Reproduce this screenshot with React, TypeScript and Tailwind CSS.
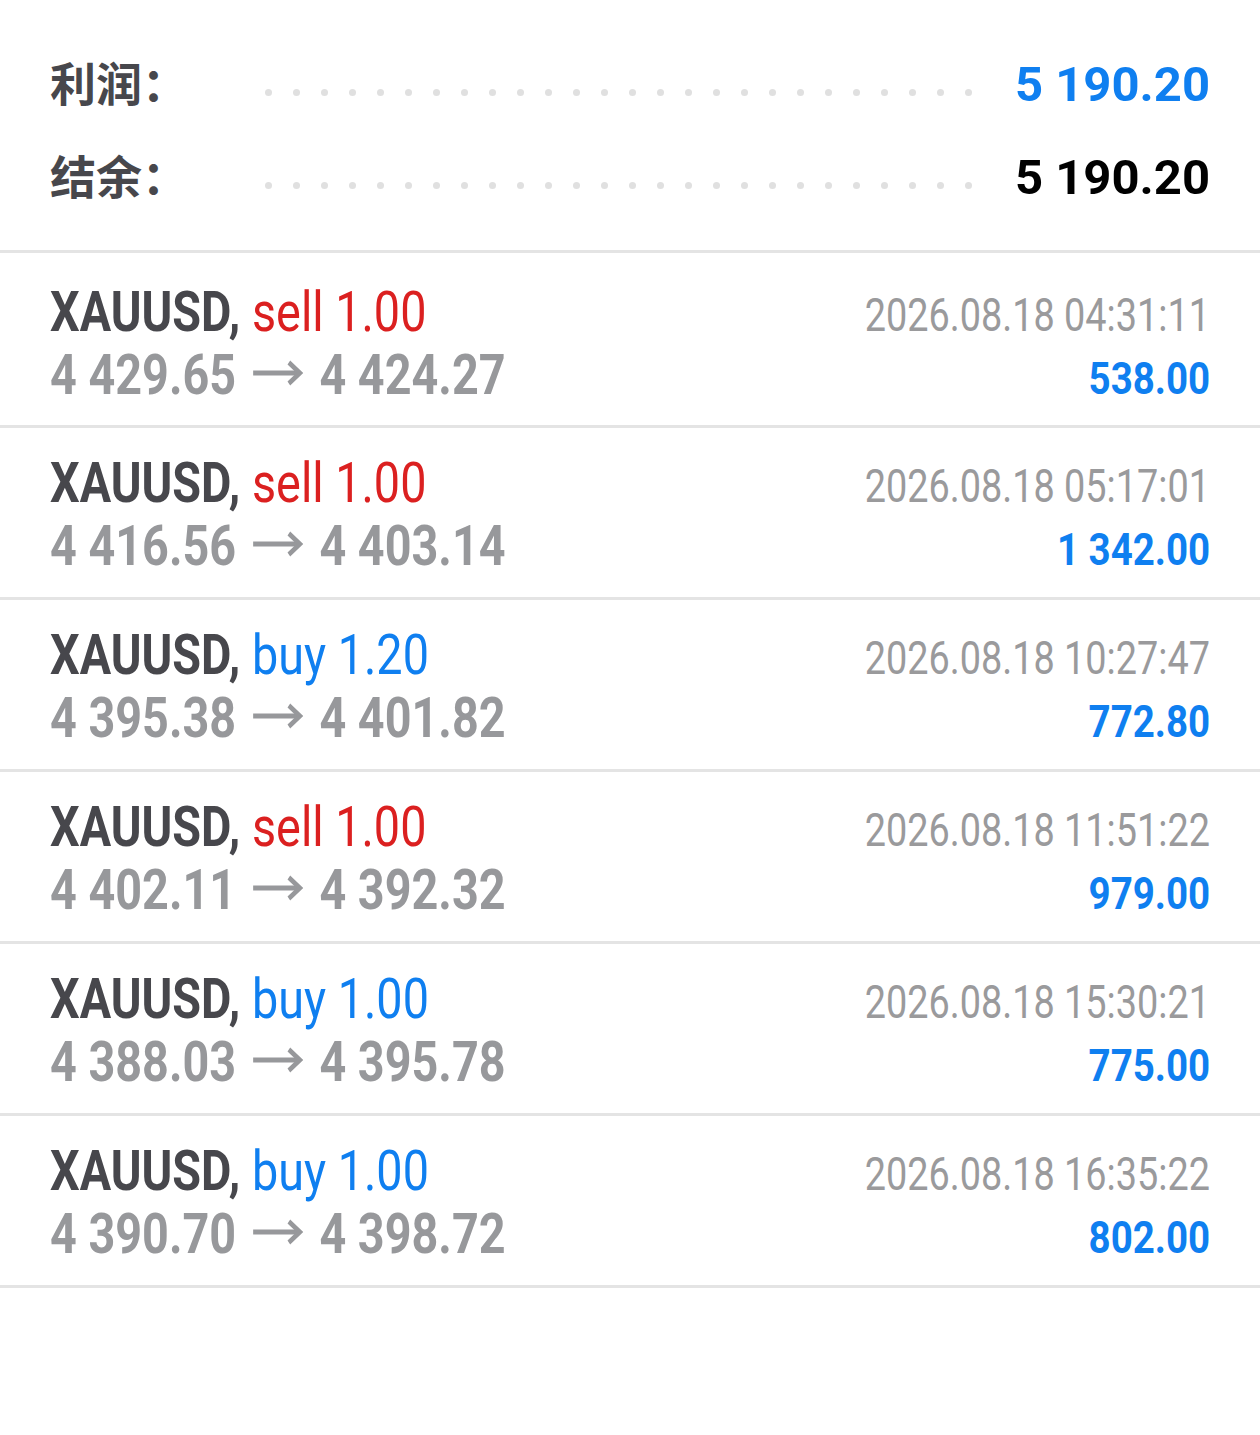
import React from "react";

type Deal = {
  side: "sell" | "buy";
  vol: string;
  open: string;
  close: string;
  time: string;
  profit: string;
};

const deals: Deal[] = [
  { side: "sell", vol: "1.00", open: "4 429.65", close: "4 424.27", time: "2026.08.18 04:31:11", profit: "538.00" },
  { side: "sell", vol: "1.00", open: "4 416.56", close: "4 403.14", time: "2026.08.18 05:17:01", profit: "1 342.00" },
  { side: "buy", vol: "1.20", open: "4 395.38", close: "4 401.82", time: "2026.08.18 10:27:47", profit: "772.80" },
  { side: "sell", vol: "1.00", open: "4 402.11", close: "4 392.32", time: "2026.08.18 11:51:22", profit: "979.00" },
  { side: "buy", vol: "1.00", open: "4 388.03", close: "4 395.78", time: "2026.08.18 15:30:21", profit: "775.00" },
  { side: "buy", vol: "1.00", open: "4 390.70", close: "4 398.72", time: "2026.08.18 16:35:22", profit: "802.00" },
];

function Dots() {
  return (
    <div className="w-[707px] flex justify-between -translate-y-[5px]">
      {Array.from({ length: 26 }).map((_, i) => (
        <div key={i} className="w-[7px] h-[7px] rounded-full bg-[#e0e0e0]" />
      ))}
    </div>
  );
}

function SummaryRow({ label, value, color }: { label: string; value: string; color: string }) {
  return (
    <div className="h-[93px] flex items-baseline leading-[60px]">
      <div className="w-[215px] font-['Noto_Sans_CJK_SC',sans-serif] font-bold text-[46px] text-[#47474c]">
        {label}
      </div>
      <Dots />
      <div className={`flex-1 text-right font-['Roboto',sans-serif] font-bold text-[49px] ${color}`}>{value}</div>
    </div>
  );
}

function Arrow() {
  return (
    <svg
      width="60"
      height="26"
      viewBox="0 0 60 26"
      className="inline-block align-[8px] mx-[19px]"
      fill="none"
      stroke="#97989b"
      strokeWidth="5"
    >
      <path d="M1 13 H55" />
      <path d="M43 2.5 L56 13 L43 23.5" strokeLinejoin="miter" />
    </svg>
  );
}

function DealRow({ d, first }: { d: Deal; first: boolean }) {
  const sideColor = d.side === "sell" ? "text-[#db2020]" : "text-[#0f7ff0]";
  return (
    <div
      className={`${first ? "h-[175px] pt-[29px]" : "h-[172px] pt-[25px]"} border-b-[3px] border-[#e4e4e4] px-[50px] font-['Roboto',sans-serif]`}
    >
      <div className="flex justify-between items-baseline leading-[60px] whitespace-nowrap">
        <span className="inline-block origin-left scale-x-[0.85] text-[55px]">
          <span className="font-bold text-[#47474c]">XAUUSD, </span>
          <span className={`${sideColor}`}>
            {d.side} {d.vol}
          </span>
        </span>
        <span className="inline-block origin-right scale-x-[0.822] text-[46px] text-[#9a9a9c]">{d.time}</span>
      </div>
      <div className="flex justify-between items-baseline leading-[60px] whitespace-nowrap">
        <span className="inline-block origin-left scale-x-[0.85] text-[55px] font-bold text-[#97989b]">
          {d.open}
          <Arrow />
          {d.close}
        </span>
        <span className="inline-block origin-right scale-x-[0.855] text-[45px] font-bold text-[#0f7ff0]">
          {d.profit}
        </span>
      </div>
    </div>
  );
}

export default function App() {
  return (
    <div className="w-[1260px] h-[1435px] bg-white overflow-hidden">
      <div className="h-[253px] pt-[51px] px-[50px] border-b-[3px] border-[#e4e4e4]">
        <SummaryRow label="利润：" value="5 190.20" color="text-[#0f7ff0]" />
        <SummaryRow label="结余：" value="5 190.20" color="text-black" />
      </div>
      {deals.map((d, i) => (
        <DealRow key={i} d={d} first={i === 0} />
      ))}
    </div>
  );
}
